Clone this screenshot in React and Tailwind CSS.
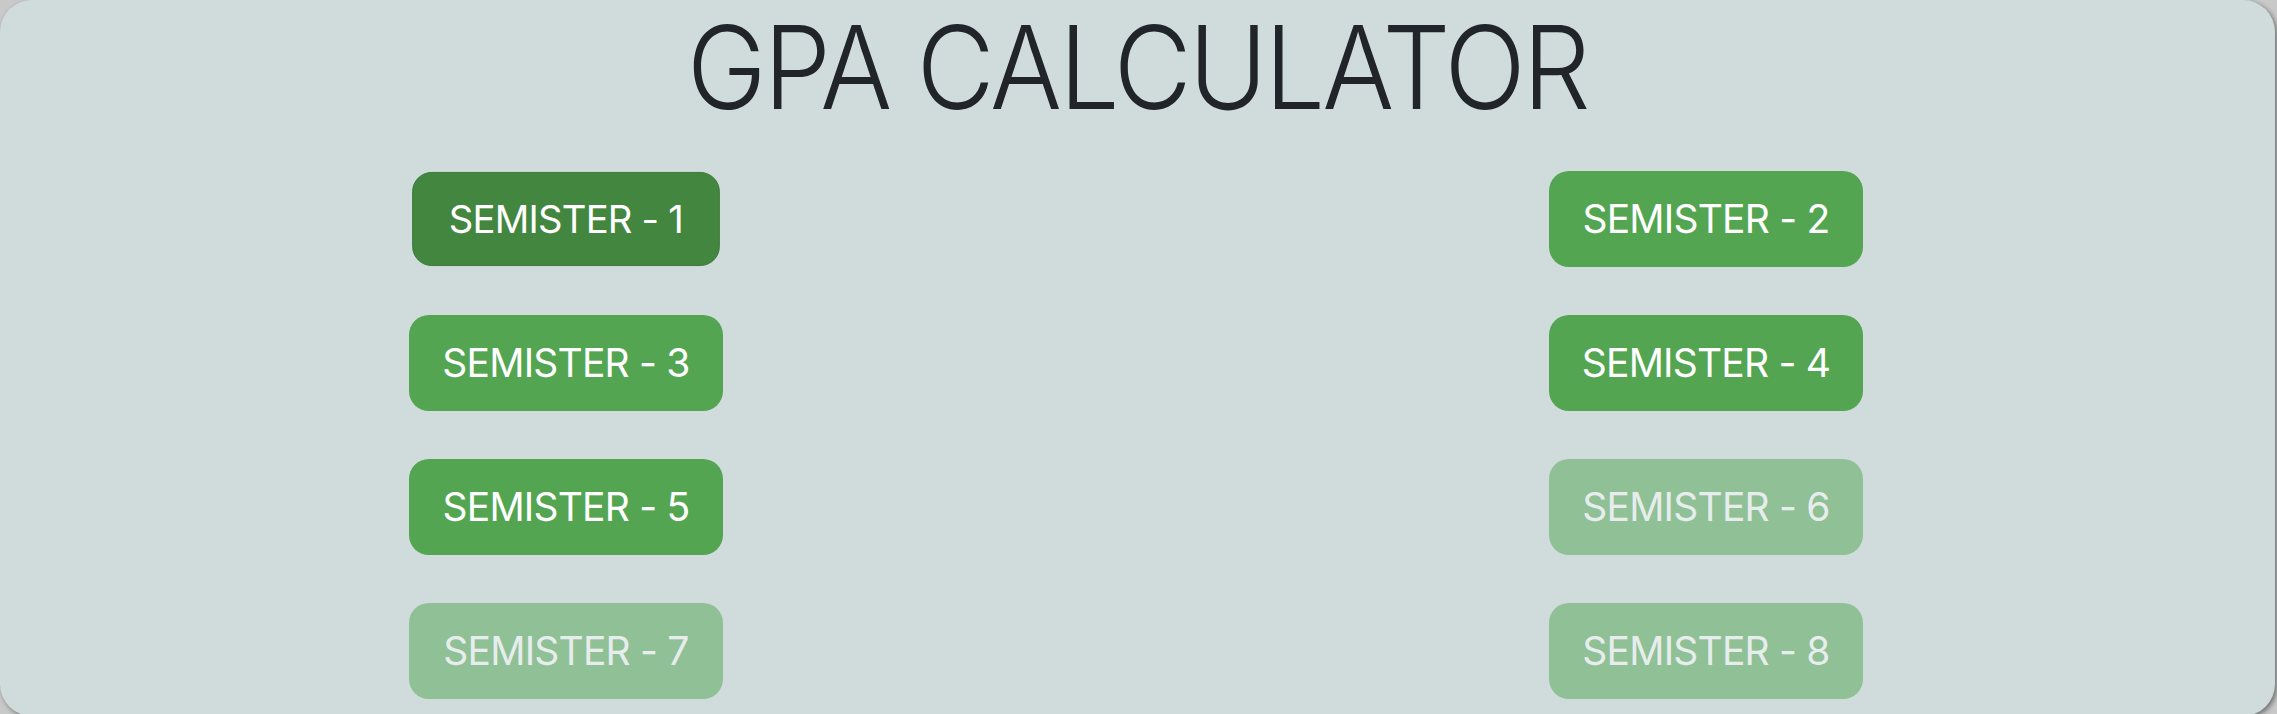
import React from "react";

const semesters = [
  { id: 1, state: "active" },
  { id: 2, state: "on" },
  { id: 3, state: "on" },
  { id: 4, state: "on" },
  { id: 5, state: "on" },
  { id: 6, state: "off" },
  { id: 7, state: "off" },
  { id: 8, state: "off" },
];

const SemesterButton = ({ id, state }) => {
  const base =
    "w-[314px] h-[96px] rounded-[20px] text-white text-[39px] tracking-[-0.8px] font-normal flex items-center justify-center";
  if (state === "active") {
    return (
      <button className={`${base} bg-[#43863f] border border-[#3b7838] scale-[0.98]`}>
        SEMISTER - {id}
      </button>
    );
  }
  if (state === "off") {
    return (
      <button className={`${base} bg-[#53a551] opacity-50`} disabled>
        SEMISTER - {id}
      </button>
    );
  }
  return <button className={`${base} bg-[#53a551]`}>SEMISTER - {id}</button>;
};

const App = () => {
  return (
    <div
      className="h-[714px] w-full bg-[#c9c9c9] overflow-hidden"
      style={{ fontFamily: "Inter, 'Liberation Sans', sans-serif" }}
    >
      <div className="w-[2275px] h-[716px] rounded-[32px] bg-[#cfdcdb] shadow-[2px_2px_5px_rgba(0,0,0,0.45)] overflow-hidden">
        {/* Title */}
        <div className="pt-[4px] pb-[40px] flex justify-center">
          <h1 className="px-[6px] text-[115px] font-light leading-[127px] tracking-[-3px] scale-x-[0.93] text-[#212529] whitespace-nowrap">
            GPA CALCULATOR
          </h1>
        </div>

        {/* Semester buttons */}
        <div className="grid grid-cols-[1132px_1148px] gap-y-[48px] justify-items-center">
          {semesters.map((s) => (
            <SemesterButton key={s.id} id={s.id} state={s.state} />
          ))}
        </div>
      </div>
    </div>
  );
};

export default App;
